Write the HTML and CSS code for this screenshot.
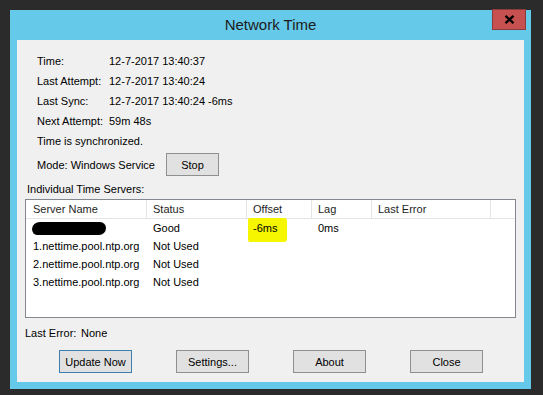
FILE: index.html
```html
<!DOCTYPE html>
<html lang="en">
<head>
    <title>Network Time</title>
    <link rel="stylesheet" href="styles.css">
</head>
<body>
    <div class="window">
        <div class="titlebar">
            <span class="title">Network Time</span>
            <div class="close-btn">
                <svg width="11" height="9" viewBox="0 0 11 9">
                    <path d="M1.5 0.8 L9.5 8.2 M9.5 0.8 L1.5 8.2" stroke="#000" stroke-width="2.3" fill="none" />
                </svg>
            </div>
        </div>

        <div class="client">
            <!-- Status info -->
            <div class="info">
                <span>Time:</span><span>12-7-2017 13:40:37</span>
                <span>Last Attempt:</span><span>12-7-2017 13:40:24</span>
                <span>Last Sync:</span><span>12-7-2017 13:40:24 -6ms</span>
                <span>Next Attempt:</span><span>59m 48s</span>
            </div>
            <div class="status">Time is synchronized.</div>
            <div class="mode-row">
                <span>Mode: Windows Service</span>
                <button type="button" class="btn stop-btn">Stop</button>
            </div>

            <!-- Server list -->
            <div class="group-label">Individual Time Servers:</div>
            <div class="listview">
                <div class="lv-row lv-head">
                    <span>Server Name</span>
                    <span>Status</span>
                    <span>Offset</span>
                    <span>Lag</span>
                    <span>Last Error</span>
                </div>
                <div class="lv-row">
                    <span><i class="redacted"></i></span>
                    <span>Good</span>
                    <span class="hl"><b>-6ms</b></span>
                    <span>0ms</span>
                    <span></span>
                </div>
                <div class="lv-row">
                    <span>1.nettime.pool.ntp.org</span>
                    <span>Not Used</span>
                    <span></span><span></span><span></span>
                </div>
                <div class="lv-row">
                    <span>2.nettime.pool.ntp.org</span>
                    <span>Not Used</span>
                    <span></span><span></span><span></span>
                </div>
                <div class="lv-row">
                    <span>3.nettime.pool.ntp.org</span>
                    <span>Not Used</span>
                    <span></span><span></span><span></span>
                </div>
            </div>

            <div class="last-error"><span class="le-label">Last Error:</span>None</div>

            <div class="buttons">
                <button type="button" class="btn btn-default">Update Now</button>
                <button type="button" class="btn">Settings...</button>
                <button type="button" class="btn">About</button>
                <button type="button" class="btn">Close</button>
            </div>
        </div>
    </div>
</body>
</html>
```

FILE: styles.css
```css
body {
    margin: 0;
    background-color: #2b2b2b;
    font-family: "Liberation Sans", Arial, sans-serif;
    font-size: 11px;
    color: #000;
}

.window {
    margin: 10px 0 0 10px;
    width: 521px;
    height: 379px;
    background: #65c9e9;
    display: flex;
    flex-direction: column;
}

.titlebar {
    height: 30px;
    position: relative;
    display: flex;
    align-items: center;
    justify-content: center;
}

.title {
    font-size: 15px;
    color: #1c1c1c;
    margin-top: -1px;
}

.close-btn {
    position: absolute;
    top: -1px;
    right: 5px;
    width: 34px;
    height: 21px;
    box-sizing: border-box;
    background: #c75050;
    border: 1px solid #8c3a3a;
    display: flex;
    align-items: center;
    justify-content: center;
}

.client {
    flex: 1;
    margin: 0 7px 7px;
    background: #f0f0f0;
    padding-top: 11px;
}

.info {
    display: grid;
    grid-template-columns: 72px auto;
    grid-auto-rows: 20px;
    align-items: center;
    padding-left: 20px;
}

.status {
    padding-left: 20px;
    line-height: 20px;
}

.mode-row {
    display: flex;
    align-items: center;
    padding-left: 20px;
    margin-top: 2px;
}

.btn {
    font-family: inherit;
    font-size: 11px;
    color: #000;
    background: #e1e1e1;
    border: 1px solid #8f8f8f;
    height: 23px;
    width: 73px;
    padding: 0;
}

.stop-btn {
    width: 53px;
    margin-left: 11px;
}

.btn-default {
    border-color: #3c7fb1;
}

.group-label {
    padding-left: 10px;
    margin-top: 4px;
    line-height: 19px;
}

.listview {
    margin-left: 8px;
    width: 491px;
    height: 119px;
    box-sizing: border-box;
    border: 1px solid #828790;
    background: #fff;
}

.lv-row {
    display: grid;
    grid-template-columns: 121px 100px 65px 60px 119px;
    height: 18px;
    align-items: center;
}

.lv-row span {
    padding-left: 6px;
    white-space: nowrap;
}

.lv-row span:first-child {
    padding-left: 7px;
}

.lv-head {
    height: 19px;
    box-sizing: border-box;
    border-bottom: 1px solid #e5e5e5;
    align-items: stretch;
}

.lv-head span {
    display: flex;
    align-items: center;
    border-right: 1px solid #e5e5e5;
    color: #1e1e1e;
}

.redacted {
    display: block;
    width: 74px;
    height: 13px;
    margin-left: -1px;
    margin-top: 1px;
    background: #000;
    border-radius: 8px 6px 7px 5px / 7px 6px 7px 6px;
}

.hl {
    position: relative;
    isolation: isolate;
}

.hl::before {
    content: "";
    position: absolute;
    left: 1px;
    top: -4px;
    width: 39px;
    height: 24px;
    background: #f6f600;
    border-radius: 2px 3px 3px 2px;
    z-index: -1;
}

.hl b {
    font-weight: normal;
}

.last-error {
    padding-left: 8px;
    margin-top: 5px;
    line-height: 21px;
}

.le-label {
    display: inline-block;
    width: 56px;
}

.buttons {
    display: flex;
    gap: 44px;
    padding-left: 42px;
    margin-top: 6px;
}
```
